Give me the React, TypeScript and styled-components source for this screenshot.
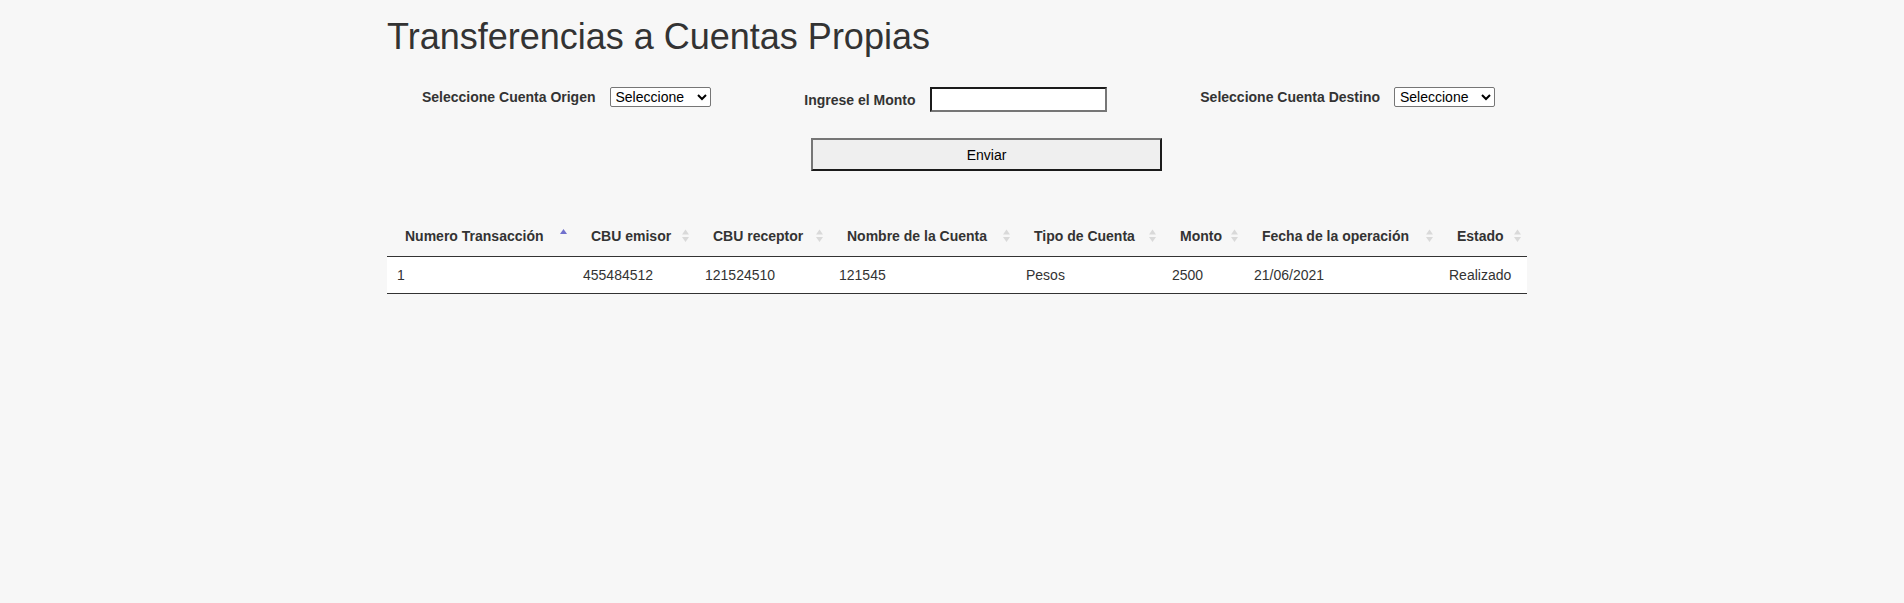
import React from "react";
import styled, { createGlobalStyle } from "styled-components";

const GlobalStyle = createGlobalStyle`
  body {
    margin: 0;
    background: #f7f7f7;
    color: #333;
    font-family: "Liberation Sans", Arial, Helvetica, sans-serif;
  }
`;

const Container = styled.div`
  max-width: 1150px;
  margin: 0 auto;
  padding: 16px 0 0 10px;
  box-sizing: border-box;
`;

const Title = styled.h1`
  margin: 0;
  font-size: 36px;
  font-weight: 400;
  line-height: 41px;
  color: #333;
`;

const FormRow = styled.div`
  display: flex;
  justify-content: space-between;
  align-items: flex-start;
  margin-top: 30px;
  padding: 0 32px 0 35px;
`;

const Field = styled.div`
  display: flex;
  align-items: baseline;
  gap: 14px;
`;

const Label = styled.label`
  font-size: 14px;
  font-weight: 700;
  line-height: 20px;
  color: #333;
`;

const Select = styled.select`
  width: 101px;
  height: 20px;
  box-sizing: border-box;
  font-family: "Liberation Sans", Arial, sans-serif;
  font-size: 14px;
  color: #000;
  background: #fff;
  border: 1px solid #767676;
  border-radius: 2px;
  padding: 0 0 0 1px;
`;

const Input = styled.input`
  width: 177px;
  height: 25px;
  box-sizing: border-box;
  font-family: "Liberation Sans", Arial, sans-serif;
  font-size: 14px;
  background: #fff;
  border-style: solid;
  border-width: 2px;
  border-color: #1b1b1b #767676 #767676 #1b1b1b;
  padding: 1px 2px;
  outline: none;
`;

const ButtonRow = styled.div`
  display: flex;
  margin-top: 26px;
  padding-left: 424px;
`;

const Button = styled.button`
  width: 351px;
  height: 33px;
  box-sizing: border-box;
  font-family: "Liberation Sans", Arial, sans-serif;
  font-size: 14px;
  color: #000;
  background: #efefef;
  border-style: solid;
  border-width: 2px;
  border-color: #767676 #1b1b1b #1b1b1b #767676;
  cursor: pointer;
`;

const Table = styled.table`
  width: 100%;
  table-layout: fixed;
  border-collapse: collapse;
  margin-top: 42px;
`;

const Col = styled.col<{ $width: number }>`
  width: ${(p) => p.$width}px;
`;

const Th = styled.th`
  padding: 13px 5px 10px 18px;
  font-size: 14px;
  font-weight: 700;
  line-height: 20px;
  text-align: left;
  color: #333;
  white-space: nowrap;
  border-bottom: 1px solid #333;
`;

const ThInner = styled.div`
  display: flex;
  justify-content: space-between;
  align-items: center;
`;

const Td = styled.td`
  padding: 8px 10px;
  font-size: 14px;
  line-height: 20px;
  color: #333;
  background: #fff;
  border-bottom: 1px solid #333;
  white-space: nowrap;
`;

const columns = [
  { title: "Numero Transacción", width: 186 },
  { title: "CBU emisor", width: 122 },
  { title: "CBU receptor", width: 134 },
  { title: "Nombre de la Cuenta", width: 187 },
  { title: "Tipo de Cuenta", width: 146 },
  { title: "Monto", width: 82 },
  { title: "Fecha de la operación", width: 195 },
  { title: "Estado", width: 88 },
];

const rows = [
  ["1", "455484512", "121524510", "121545", "Pesos", "2500", "21/06/2021", "Realizado"],
];

const SortCaret = ({ active }: { active?: boolean }) => (
  <svg width="9" height="16" viewBox="0 0 9 16">
    {active ? (
      <path d="M1 6 L4.5 1 L8 6 Z" fill="#7171cd" />
    ) : (
      <>
        <path d="M1 6.5 L4.5 1.5 L8 6.5 Z" fill="#d9d9d9" />
        <path d="M1 9 L4.5 14 L8 9 Z" fill="#d9d9d9" />
      </>
    )}
  </svg>
);

export default function App() {
  return (
    <>
      <GlobalStyle />
      <Container>
        <Title>Transferencias a Cuentas Propias</Title>
        <FormRow>
          <Field>
            <Label>Seleccione Cuenta Origen</Label>
            <Select defaultValue="">
              <option value="">Seleccione</option>
            </Select>
          </Field>
          <Field>
            <Label>Ingrese el Monto</Label>
            <Input type="text" />
          </Field>
          <Field>
            <Label>Seleccione Cuenta Destino</Label>
            <Select defaultValue="">
              <option value="">Seleccione</option>
            </Select>
          </Field>
        </FormRow>
        <ButtonRow>
          <Button type="button">Enviar</Button>
        </ButtonRow>
        <Table>
          <colgroup>
            {columns.map((c) => (
              <Col key={c.title} $width={c.width} />
            ))}
          </colgroup>
          <thead>
            <tr>
              {columns.map((c, i) => (
                <Th key={c.title}>
                  <ThInner>
                    <span>{c.title}</span>
                    <SortCaret active={i === 0} />
                  </ThInner>
                </Th>
              ))}
            </tr>
          </thead>
          <tbody>
            {rows.map((r) => (
              <tr key={r[0]}>
                {r.map((v, i) => (
                  <Td key={i}>{v}</Td>
                ))}
              </tr>
            ))}
          </tbody>
        </Table>
      </Container>
    </>
  );
}
